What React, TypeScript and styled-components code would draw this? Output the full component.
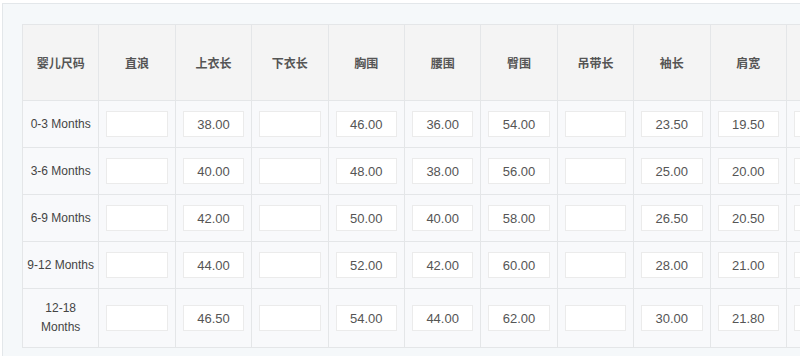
import React from "react";
import styled, { createGlobalStyle } from "styled-components";

const headers = ["婴儿尺码", "直浪", "上衣长", "下衣长", "胸围", "腰围", "臀围", "吊带长", "袖长", "肩宽", "裤长"];

const rows: { size: string; values: string[] }[] = [
  { size: "0-3 Months", values: ["", "38.00", "", "46.00", "36.00", "54.00", "", "23.50", "19.50", ""] },
  { size: "3-6 Months", values: ["", "40.00", "", "48.00", "38.00", "56.00", "", "25.00", "20.00", ""] },
  { size: "6-9 Months", values: ["", "42.00", "", "50.00", "40.00", "58.00", "", "26.50", "20.50", ""] },
  { size: "9-12 Months", values: ["", "44.00", "", "52.00", "42.00", "60.00", "", "28.00", "21.00", ""] },
  { size: "12-18 Months", values: ["", "46.50", "", "54.00", "44.00", "62.00", "", "30.00", "21.80", ""] },
];

function App() {
  return (
    <>
      <GlobalStyle />
      <Page>
        <Panel>
          <Table>
            <colgroup>
              {headers.map((h) => (
                <col key={h} />
              ))}
            </colgroup>
            <thead>
              <tr>
                {headers.map((h) => (
                  <HeadCell key={h}>{h}</HeadCell>
                ))}
              </tr>
            </thead>
            <tbody>
              {rows.map((r) => (
                <tr key={r.size}>
                  <SizeCell>{r.size}</SizeCell>
                  {r.values.map((v, i) => (
                    <Cell key={i}>
                      <ValueInput type="text" defaultValue={v} />
                    </Cell>
                  ))}
                </tr>
              ))}
            </tbody>
          </Table>
        </Panel>
      </Page>
    </>
  );
}

const GlobalStyle = createGlobalStyle`
  body {
    margin: 0;
    background: #fff;
    font-family: "Liberation Sans", "Noto Sans CJK SC", sans-serif;
  }
`;

const Page = styled.div`
  width: 800px;
  height: 356px;
  overflow: hidden;
  padding: 3px 0 0 2px;
  box-sizing: border-box;
`;

const Panel = styled.div`
  width: 1000px;
  height: 360px;
  box-sizing: border-box;
  border-top: 1px solid #e3e7ea;
  border-left: 1px solid #e3e7ea;
  background: #f5f8fa;
  padding: 20px 0 0 19px;
`;

const Table = styled.table`
  table-layout: fixed;
  width: ${76.4 * 11}px;
  border-collapse: collapse;
  border: 1px solid #e4e6e8;
  col {
    width: 76.4px;
  }
`;

const HeadCell = styled.th`
  height: 75px;
  padding: 0;
  background: #f4f4f4;
  border: 1px solid #e4e6e8;
  color: #555;
  font-size: 12px;
  font-weight: bold;
  font-family: "Noto Sans CJK SC", sans-serif;
  text-align: center;
  vertical-align: middle;
`;

const Cell = styled.td`
  height: 47px;
  padding: 0 7px;
  box-sizing: border-box;
  background: #f8f9fb;
  border: 1px solid #e4e6e8;
  text-align: center;
  vertical-align: middle;
`;

const SizeCell = styled(Cell)`
  padding: 10px 4px;
  color: #444;
  font-size: 12px;
  line-height: 19px;
`;

const ValueInput = styled.input`
  display: block;
  width: 100%;
  height: 26px;
  box-sizing: border-box;
  border: 1px solid #ebebeb;
  background: #fff;
  color: #555;
  font-family: "Liberation Sans", sans-serif;
  font-size: 13px;
  text-align: center;
  padding: 0;
  outline: none;
`;

export default App;
